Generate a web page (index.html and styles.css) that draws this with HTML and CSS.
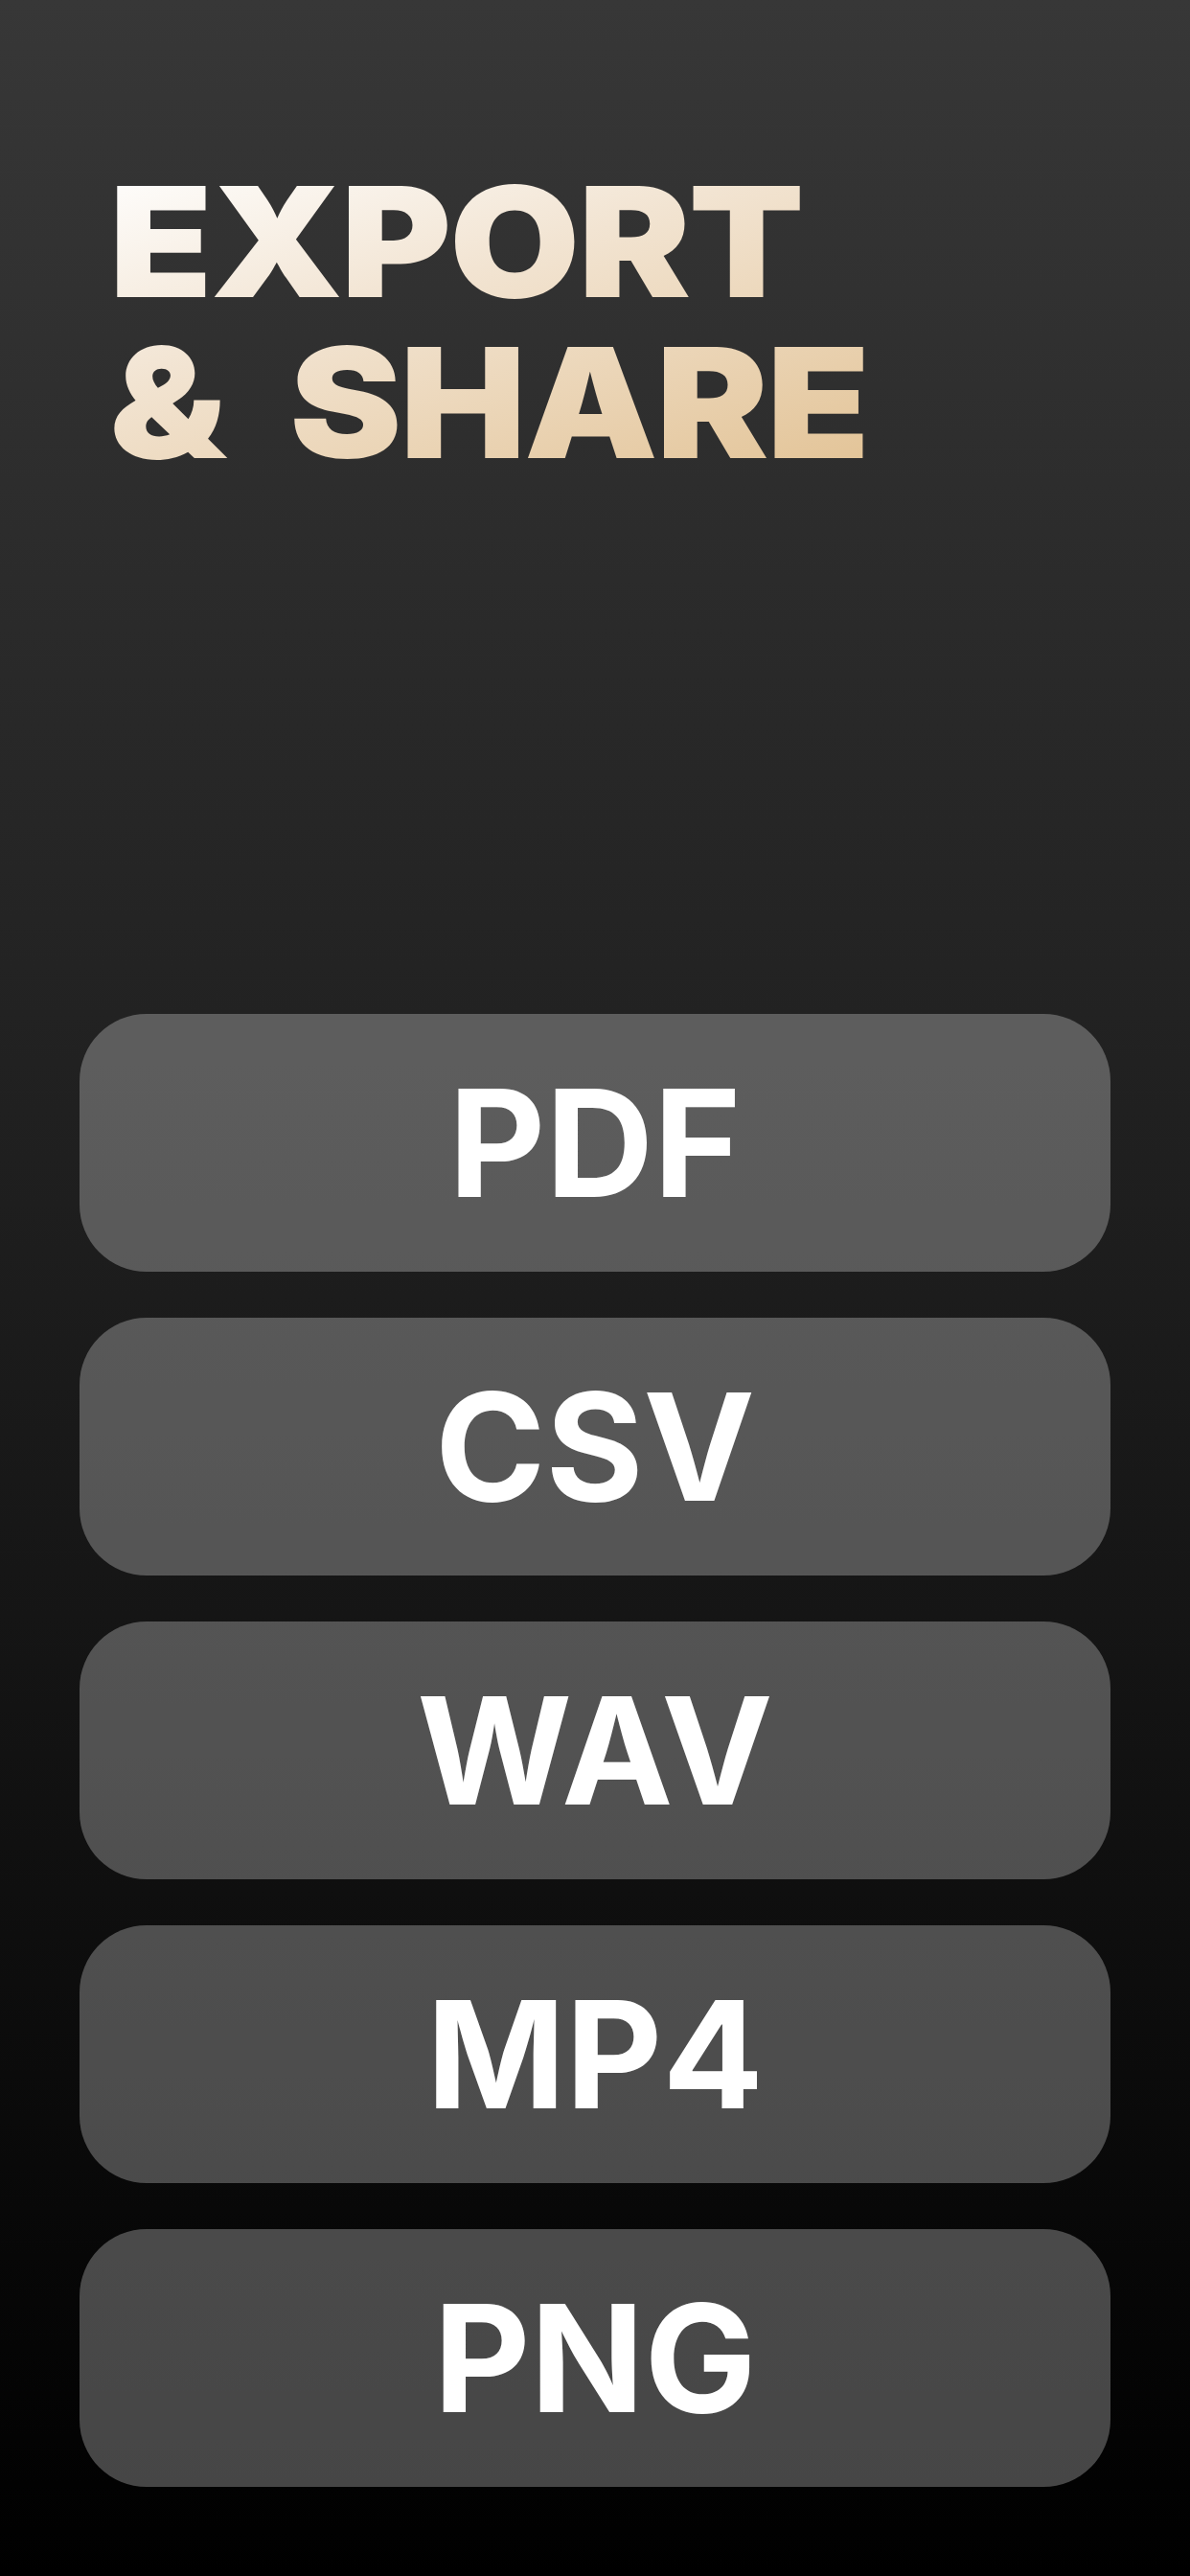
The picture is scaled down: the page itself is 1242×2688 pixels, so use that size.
FILE: index.html
```html
<!DOCTYPE html>
<html lang="en">
<head>
  <meta charset="UTF-8" />
  <meta name="viewport" content="width=device-width, initial-scale=1.0"/>
  <title>Export &amp; Share</title>
  <link rel="stylesheet" href="styles.css">
</head>
<body>
  <div id="screen">
    <h1 class="title">EXPORT<br>&amp; SHARE</h1>
    <div class="formats">
      <button class="format-btn">PDF</button>
      <button class="format-btn">CSV</button>
      <button class="format-btn">WAV</button>
      <button class="format-btn">MP4</button>
      <button class="format-btn">PNG</button>
    </div>
  </div>
</body>
</html>
```

FILE: styles.css
```css
* { box-sizing: border-box; margin: 0; padding: 0; }
html, body { height: 100%; }
body {
  background: linear-gradient(to bottom, #373737 0%, #1f1f1f 45%, #000 100%);
  min-height: 2688px;
  font-family: 'Inter', 'Liberation Sans', sans-serif;
}
#screen {
  padding: 168px 83px 0;
}
.title {
  display: inline-block;
  margin-left: 31px;
  font-family: 'Inter', sans-serif;
  font-weight: 900;
  font-size: 160px;
  line-height: 168px;
  letter-spacing: -2px;
  word-spacing: 32px;
  transform: scaleX(1.1);
  transform-origin: left top;
  background: linear-gradient(160deg, #ffffff 0%, #f2e4d2 40%, #e2c294 100%);
  -webkit-background-clip: text;
  background-clip: text;
  color: transparent;
}
.formats {
  display: flex;
  flex-direction: column;
  gap: 48px;
  margin-top: 554px;
}
.format-btn {
  height: 269px;
  border: none;
  border-radius: 70px;
  background: rgba(255,255,255,0.27);
  color: #fff;
  font-family: 'Inter', sans-serif;
  font-weight: 700;
  font-size: 156px;
  line-height: 1;
  display: flex;
  align-items: center;
  justify-content: center;
  cursor: pointer;
}
```
